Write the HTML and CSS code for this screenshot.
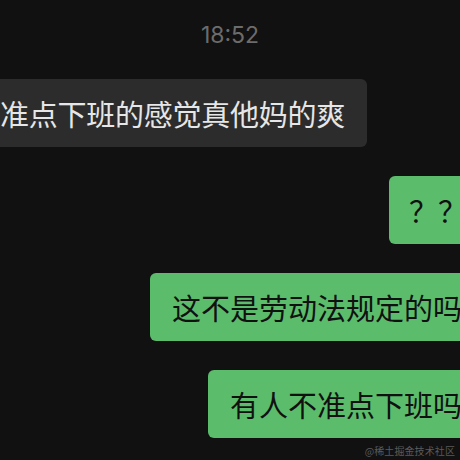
FILE: index.html
```html
<!DOCTYPE html>
<html lang="zh-CN">
<head>
<meta charset="utf-8">
<link rel="stylesheet" href="styles.css">
</head>
<body>
<div class="chat">
  <div class="time">18:52</div>
  <div class="row row-in"><div class="bubble bubble-in">准点下班的感觉真他妈的爽</div></div>
  <div class="row row-out"><div class="bubble bubble-out bubble-short">？？</div></div>
  <div class="row row-out"><div class="bubble bubble-out">这不是劳动法规定的吗</div></div>
  <div class="row row-out"><div class="bubble bubble-out">有人不准点下班吗</div></div>
</div>
<div class="watermark">@稀土掘金技术社区</div>
</body>
</html>
```
FILE: styles.css
```css
html, body {
  margin: 0;
  padding: 0;
  width: 460px;
  height: 460px;
  overflow: hidden;
  background: #111111;
}
body {
  position: relative;
  font-family: "Noto Sans CJK SC", "Noto Sans", sans-serif;
}
.chat {
  display: flex;
  flex-direction: column;
  gap: 29px;
  padding-top: 20px;
  margin: 0 -24px 0 -22px;
}
.time {
  text-align: center;
  font-family: "Inter", "Noto Sans", sans-serif;
  font-size: 23px;
  line-height: 30px;
  color: #6c6c6c;
  transform: translateX(-1px);
}
.row {
  display: flex;
}
.row-in { justify-content: flex-start; }
.row-out { justify-content: flex-end; }
.bubble {
  font-size: 29px;
  line-height: 40px;
  padding: 14px 22px;
  border-radius: 6px;
  white-space: nowrap;
}
.bubble-in {
  background: #2c2c2c;
  color: #e6e6e6;
  letter-spacing: -0.25px;
}
.bubble-out {
  background: #5bbd6b;
  color: #111111;
}
.bubble-short {
  padding: 14px 17px 14px 20px;
}
.watermark {
  position: absolute;
  right: 5px;
  bottom: 2px;
  font-size: 10px;
  line-height: 14px;
  color: #5a5a5a;
  letter-spacing: 0.1px;
}
```
